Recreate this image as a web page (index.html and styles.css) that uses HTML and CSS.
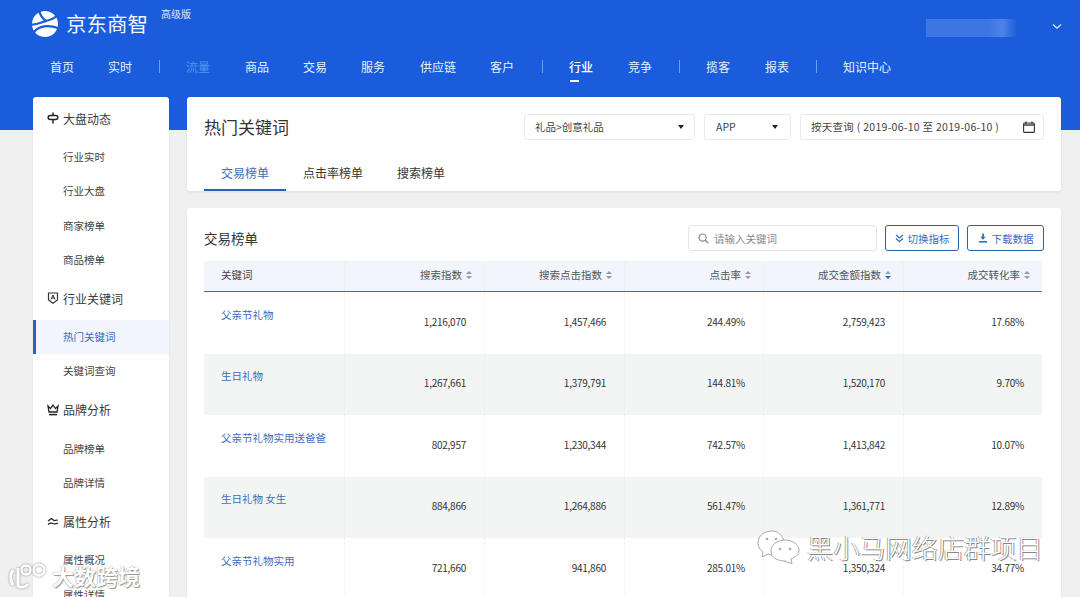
FILE: index.html
```html
<!DOCTYPE html>
<html lang="zh">
<head>
<meta charset="utf-8">
<title>京东商智</title>
<link rel="stylesheet" href="styles.css">
</head>
<body>
<div class="page">
  <div class="blue-band"></div>
  <header class="header">
    <div class="brand-row">
      <svg class="logo" width="28" height="28" viewBox="0 0 28 28"><circle cx="14" cy="14" r="13" fill="#fff"/><path d="M8 0C9 5 11 8 15 11C19 10 23 9 27 5M15 11C11 12 6 15 0 14.5M3 22C8 16 17 14 28 18.5" fill="none" stroke="#1a5cdb" stroke-width="2.2"/></svg>
      <span class="brand">京东商智</span>
      <span class="edition">高级版</span>
      <span class="account-mask"></span>
      <svg class="chev" width="10" height="7" viewBox="0 0 10 7"><path d="M1 1.5 L5 5.2 L9 1.5" fill="none" stroke="#dce8ff" stroke-width="1.3"/></svg>
    </div>
    <nav class="nav">
      <a class="n1">首页</a><a class="n2">实时</a><i class="sep s1"></i>
      <a class="n3 dim">流量</a><a class="n4">商品</a><a class="n5">交易</a><a class="n6">服务</a><a class="n7">供应链</a><a class="n8">客户</a><i class="sep s2"></i>
      <a class="n9 active">行业</a><a class="n10">竞争</a><i class="sep s3"></i>
      <a class="n11">揽客</a><a class="n12">报表</a><i class="sep s4"></i>
      <a class="n13">知识中心</a>
    </nav>
  </header>
  <div class="content">
    <aside class="side">
      <div class="group">
        <svg class="gi" width="12" height="12" viewBox="0 0 12 12"><path d="M6 0.5V11.5" stroke="#222" stroke-width="1.5"/><rect x="1.2" y="3.4" width="9.6" height="4.2" rx="2" fill="#fff" stroke="#222" stroke-width="1.5"/></svg>大盘动态</div>
      <a class="item">行业实时</a><a class="item">行业大盘</a><a class="item">商家榜单</a><a class="item">商品榜单</a>
      <div class="group">
        <svg class="gi" width="12" height="12" viewBox="0 0 12 12"><path d="M1.5 1H10.5V8L6 11.2L1.5 8Z" fill="none" stroke="#333" stroke-width="1.2"/><path d="M4 7.5L6 3L8 7.5M4.8 6H7.2" fill="none" stroke="#333" stroke-width="1"/></svg>行业关键词</div>
      <a class="item current">热门关键词</a><a class="item">关键词查询</a>
      <div class="group">
        <svg class="gi" width="12" height="12" viewBox="0 0 12 12"><path d="M1 2L3.5 4.6L6 1.2L8.5 4.6L11 2L10 8H2Z" fill="none" stroke="#222" stroke-width="1.3"/><path d="M2 10.6H10" stroke="#222" stroke-width="1.5"/></svg>品牌分析</div>
      <a class="item">品牌榜单</a><a class="item">品牌详情</a>
      <div class="group">
        <svg class="gi" width="12" height="12" viewBox="0 0 12 12"><path d="M1 6L4.5 3.5L7 5.5L11 5M1 9.5C3 7.8 4 7.8 6 8.5S9 9 11 8" fill="none" stroke="#222" stroke-width="1.2"/></svg>属性分析</div>
      <a class="item">属性概况</a><a class="item">属性详情</a>
    </aside>
    <main class="main">
      <section class="card top-card">
        <div class="top-row">
          <h1 class="title">热门关键词</h1>
          <div class="filters">
            <div class="select sel-cat"><span>礼品&gt;创意礼品</span><b class="caret"></b></div>
            <div class="select sel-app"><span>APP</span><b class="caret"></b></div>
            <div class="select sel-date"><span class="date-text">按天查询 ( 2019-06-10 至 2019-06-10 )</span>
              <svg width="12" height="12" viewBox="0 0 12 12"><rect x="0.6" y="2" width="10.8" height="9.4" rx="1" fill="none" stroke="#333" stroke-width="1.1"/><path d="M0.6 4H11.4" stroke="#333" stroke-width="1.4"/><path d="M3 0.5V3M9 0.5V3" stroke="#333" stroke-width="1.2"/></svg>
            </div>
          </div>
        </div>
        <div class="tabs">
          <a class="tab on">交易榜单</a><a class="tab">点击率榜单</a><a class="tab">搜索榜单</a>
        </div>
      </section>
      <section class="card list-card">
        <div class="list-head">
          <h2 class="subtitle">交易榜单</h2>
          <div class="tools">
            <div class="search">
              <svg width="11" height="11" viewBox="0 0 11 11"><circle cx="4.6" cy="4.6" r="3.6" fill="none" stroke="#888" stroke-width="1.2"/><path d="M7.3 7.3L10.3 10.3" stroke="#888" stroke-width="1.3"/></svg>
              <span>请输入关键词</span>
            </div>
            <a class="btn btn-a"><svg width="9" height="9" viewBox="0 0 9 9"><path d="M1 1L4.5 4L8 1M1 4.5L4.5 7.5L8 4.5" fill="none" stroke="#2a62b8" stroke-width="1.1"/></svg>切换指标</a>
            <a class="btn btn-b"><svg width="10" height="10" viewBox="0 0 10 10"><path d="M5 0.5V5.5" stroke="#2a62b8" stroke-width="1.6"/><path d="M2.3 3.8H7.7L5 6.8Z" fill="#2a62b8"/><path d="M1 8.8H9" stroke="#2a62b8" stroke-width="1.5"/></svg>下载数据</a>
          </div>
        </div>
        <div class="table">
          <div class="tr th">
            <div class="c first">关键词</div>
            <div class="c">搜索指数<i class="sort"></i></div>
            <div class="c">搜索点击指数<i class="sort"></i></div>
            <div class="c">点击率<i class="sort"></i></div>
            <div class="c">成交金额指数<i class="sort blue"></i></div>
            <div class="c">成交转化率<i class="sort"></i></div>
          </div>
          <div class="tr"><div class="c first"><a>父亲节礼物</a></div><div class="c">1,216,070</div><div class="c">1,457,466</div><div class="c">244.49%</div><div class="c">2,759,423</div><div class="c">17.68%</div></div>
          <div class="tr alt"><div class="c first"><a>生日礼物</a></div><div class="c">1,267,661</div><div class="c">1,379,791</div><div class="c">144.81%</div><div class="c">1,520,170</div><div class="c">9.70%</div></div>
          <div class="tr"><div class="c first"><a>父亲节礼物实用送爸爸</a></div><div class="c">802,957</div><div class="c">1,230,344</div><div class="c">742.57%</div><div class="c">1,413,842</div><div class="c">10.07%</div></div>
          <div class="tr alt"><div class="c first"><a>生日礼物 女生</a></div><div class="c">884,866</div><div class="c">1,264,886</div><div class="c">561.47%</div><div class="c">1,361,771</div><div class="c">12.89%</div></div>
          <div class="tr"><div class="c first"><a>父亲节礼物实用</a></div><div class="c">721,660</div><div class="c">941,860</div><div class="c">285.01%</div><div class="c">1,350,324</div><div class="c">34.77%</div></div>
        </div>
      </section>
    </main>
  </div>
  <div class="wm wm-left">
    <svg class="wm-logo" width="40" height="28" viewBox="0 0 40 28"><path d="M4 9C1 13 1 19 4 24M9 7V25C13 27 17 26 19 23" fill="none" stroke="#fff" stroke-width="3"/><circle cx="17" cy="9" r="4.5" fill="none" stroke="#fff" stroke-width="2.4"/><circle cx="30" cy="9" r="5.5" fill="none" stroke="#fff" stroke-width="2.4"/></svg>
    <span>大数跨境</span>
  </div>
  <div class="wm wm-right">
    <svg width="44" height="34" viewBox="0 0 44 34"><path d="M15 1C7 1 1 6 1 13C1 17 3 20 6 22L5 27L11 24L14 25C18 26 14 14 27 11C25 5 21 1 15 1Z" fill="#fff" stroke="#a9a9a9" stroke-width="1"/><path d="M28 10C20 10 14 15 14 21C14 27 20 31 28 31L35 34L34 29C38 27 42 25 42 20C42 15 36 10 28 10Z" fill="#fff" stroke="#a9a9a9" stroke-width="1"/><circle cx="10" cy="9" r="1.3" fill="#aaa"/><circle cx="19" cy="9" r="1.3" fill="#aaa"/><circle cx="23" cy="19" r="1.3" fill="#aaa"/><circle cx="33" cy="19" r="1.3" fill="#aaa"/></svg>
    <span>黑小马网络店群项目</span>
  </div>
</div>
</body>
</html>
```

FILE: styles.css
```css
* { box-sizing: border-box; }
html, body { margin: 0; padding: 0; height: 597px; overflow: hidden; }
body { background: #f0f0f0; font-family: "Noto Sans CJK SC", "Noto Sans", "Liberation Sans", sans-serif; font-size: 11px; color: #333; }
a { color: inherit; text-decoration: none; }
h1, h2 { margin: 0; font-weight: 400; }
.page { position: relative; width: 1080px; height: 597px; overflow: hidden; }
.blue-band { position: absolute; left: 0; top: 0; width: 1080px; height: 130px; background: #1a5cdb; }

.header { position: relative; height: 97px; color: #e8f0ff; }
.brand-row { display: flex; align-items: center; height: 46px; padding-left: 31px; position: relative; }
.logo { flex: none; margin-top: 1px; }
.brand { font-size: 20.5px; color: #f2f6ff; margin-left: 7px; line-height: 46px; }
.edition { font-size: 10px; color: #dce8ff; align-self: flex-start; margin: 6px 0 0 13px; line-height: 16px; }
.account-mask { position: absolute; left: 926px; top: 19px; width: 90px; height: 18px; background: linear-gradient(90deg, #3d77e4 0, #3d77e4 70%, #4d83e6 85%, #1f60dc 100%); }
.chev { position: absolute; left: 1052px; top: 23px; }

.nav { position: relative; height: 40px; font-size: 12px; }
.nav a { position: absolute; top: 11px; line-height: 20px; color: #e8f0ff; }
.nav .dim { color: #4e97f2; }
.nav .active { font-weight: 500; color: #fff; }
.nav .active::after { content: ""; position: absolute; left: 1px; top: 23px; width: 9px; height: 2px; background: #fff; }
.n1 { left: 50px; } .n2 { left: 108px; } .n3 { left: 186px; } .n4 { left: 245px; } .n5 { left: 303px; } .n6 { left: 361px; }
.n7 { left: 420px; } .n8 { left: 490px; } .n9 { left: 569px; } .n10 { left: 628px; } .n11 { left: 706px; } .n12 { left: 765px; } .n13 { left: 843px; }
.sep { position: absolute; top: 14px; width: 1px; height: 13px; background: #6f9ceb; }
.s1 { left: 159px; } .s2 { left: 542px; } .s3 { left: 679px; } .s4 { left: 816px; }

.content { position: relative; display: flex; align-items: flex-start; gap: 18px; padding-left: 33px; }
.side { width: 136px; flex: none; height: 560px; background: #fff; border-radius: 3px 3px 0 0; box-shadow: 0 0 2px rgba(0,0,0,.08); }
.group { display: flex; align-items: center; height: 44px; padding: 0 0 2px 14px; font-size: 12px; color: #3a3a3a; }
.gi { margin-right: 4px; flex: none; }
.item { display: block; height: 34.3px; line-height: 34px; padding-left: 30px; font-size: 10.5px; color: #444; }
.group + .item { margin-top: -1px; }
.current { color: #3c6cc0; background: #f2f5fc; border-left: 3px solid #2a62b8; padding-left: 27px; }

.main { width: 874px; flex: none; display: flex; flex-direction: column; gap: 17px; }
.card { background: #fff; border-radius: 3px; box-shadow: 0 1px 3px rgba(0,0,0,.08); }
.top-card { height: 94px; padding: 0 17px; }
.top-row { display: flex; justify-content: space-between; align-items: center; height: 60px; padding-bottom: 1px; }
.title { font-size: 17px; color: #333; line-height: 24px; margin-top: 1px; }
.filters { display: flex; gap: 9px; align-items: center; }
.select { display: flex; align-items: center; justify-content: space-between; height: 26px; padding: 0 10px; border: 1px solid #e8e8e8; border-radius: 3px; font-size: 10.5px; color: #444; background: #fff; }
.sel-cat { width: 171px; }
.sel-app { width: 87px; padding-left: 11px; padding-right: 12px; }
.sel-date { width: 244px; padding-right: 8px; }
.date-text { letter-spacing: .28px; }
.caret { width: 0; height: 0; border-left: 3.5px solid transparent; border-right: 3.5px solid transparent; border-top: 4px solid #222; }
.tabs { display: flex; height: 34px; }
.tab { display: block; height: 34px; line-height: 32px; font-size: 12px; color: #333; padding: 0 17px; }
.tab.on { color: #3c6cc0; width: 82px; border-bottom: 2px solid #2a62b8; }

.list-card { height: 420px; padding: 0 17px; }
.list-head { display: flex; justify-content: space-between; align-items: center; height: 53px; padding-top: 8px; }
.subtitle { font-size: 13.5px; color: #333; margin-top: -1px; line-height: 18px; }
.tools { display: flex; gap: 8px; align-items: center; margin-top: -1px; }
.search { display: flex; align-items: center; gap: 5px; width: 189px; height: 26px; padding-left: 9px; border: 1px solid #e4e4e4; border-radius: 3px; font-size: 10.5px; color: #8a8a8a; }
.btn { display: flex; align-items: center; justify-content: center; gap: 4px; height: 26px; border: 1px solid #2a62a8; border-radius: 3px; font-size: 10.5px; color: #3c6cc0; }
.btn-a { width: 74px; }
.btn-b { width: 77px; }

.table { width: 838px; }
.tr { display: grid; grid-template-columns: 140px 140px 140px 139px 140px 139px; height: 61.5px; }
.tr.alt { background: #f3f4f4; }
.c { display: flex; justify-content: flex-end; align-items: center; padding: 0 18px 3px 0; font-size: 10px; letter-spacing: -.25px; color: #333; border-left: 1px dotted #ececec; }
.c.first { justify-content: flex-start; align-items: flex-start; padding: 14.5px 0 0 17px; border-left: 0; font-size: 10.5px; letter-spacing: 0; }
.c.first a { color: #3c6cc0; line-height: 16px; }
.th { height: 31px; background: #f2f6fc; border-bottom: 1px solid #3a6fb5; }
.th .c { color: #555; font-size: 10.5px; letter-spacing: 0; padding: 0 12px 3px 0; }
.th .c.first { align-items: center; padding: 0 0 3px 17px; color: #444; }
.sort { display: inline-block; position: relative; width: 6px; height: 8px; margin-left: 4px; }
.sort::before, .sort::after { content: ""; position: absolute; left: 0; border-left: 3px solid transparent; border-right: 3px solid transparent; }
.sort::before { top: 0; border-bottom: 3px solid #999; }
.sort::after { bottom: 0; border-top: 3px solid #999; }
.sort.blue::before { border-bottom-color: #8aa; }
.sort.blue::after { border-top-color: #2a62b8; }

.wm { position: absolute; display: flex; align-items: center; }
.wm-logo { filter: drop-shadow(0 0 1px #888); }
.wm-left { left: 9px; top: 561px; gap: 3px; }
.wm-left span { font-size: 22px; font-weight: 700; color: #fff; line-height: 28px; text-shadow: 0 0 1px #777, 1px 1px 1px #999; }
.wm-right { left: 757px; top: 530px; gap: 6px; }
.wm-right span { font-size: 26.2px; line-height: 34px; color: #fff; font-weight: 300; text-shadow: 1px 1px 0 #888, -1px 0 0 #aaa; }
```
